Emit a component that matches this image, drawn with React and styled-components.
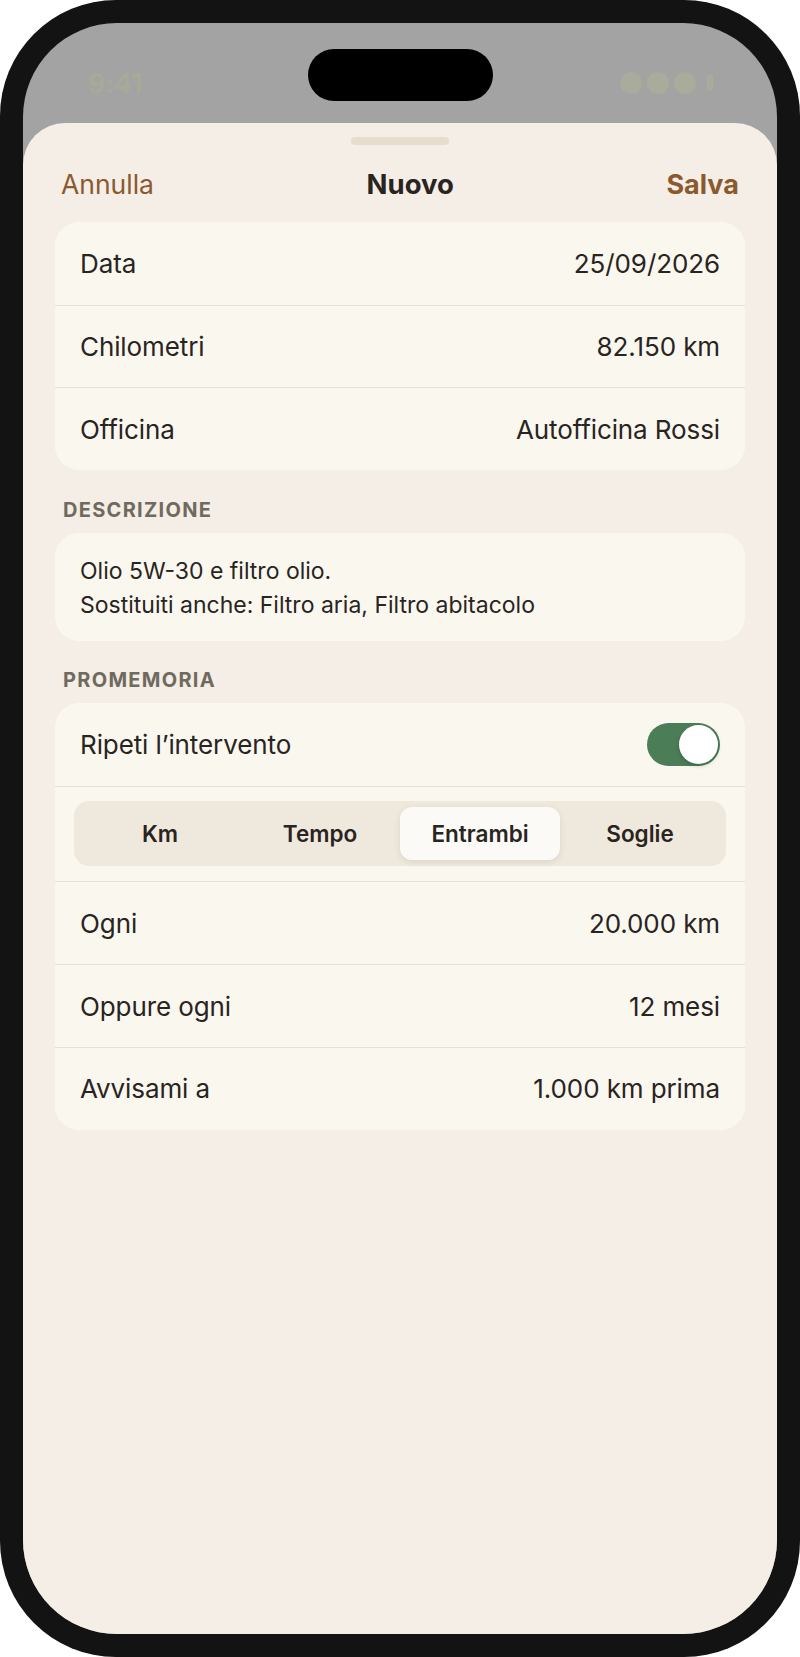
import React, { useState } from 'react';
import styled, { createGlobalStyle } from 'styled-components';

const GlobalStyle = createGlobalStyle`
  html, body {
    margin: 0;
    padding: 0;
    background: #ffffff;
  }
  * {
    box-sizing: border-box;
  }
`;

// Phone shell
const Phone = styled.div`
  width: 800px;
  height: 1657px;
  background: #131313;
  border-radius: 116px;
  padding: 23px;
  display: flex;
`;

const Screen = styled.div`
  flex: 1;
  display: flex;
  flex-direction: column;
  background: #a4a3a3;
  border-radius: 94px;
  overflow: hidden;
  font-family: Inter, "Noto Sans", sans-serif;
  color: #29241f;
`;

const StatusBar = styled.div`
  height: 100px;
  flex-shrink: 0;
  display: grid;
  grid-template-columns: 1fr auto 1fr;
  align-items: start;
  padding: 26px 64px 0 65px;
`;

const Time = styled.span`
  justify-self: start;
  margin-top: 18px;
  font-size: 27px;
  font-weight: 700;
  color: #a7a999;
  letter-spacing: -0.3px;
`;

const Island = styled.div`
  width: 185px;
  height: 52px;
  border-radius: 26px;
  background: #000;
`;

const StatusIcons = styled.div`
  justify-self: end;
  margin-top: 23px;
  display: flex;
  align-items: center;
  gap: 5px;
`;

const Dot = styled.span`
  width: 22px;
  height: 22px;
  border-radius: 50%;
  background: #a9ab9b;
`;

const Nub = styled.span`
  width: 6px;
  height: 16px;
  border-radius: 2px;
  background: #a9ab9b;
  margin-left: 6px;
`;

// Sheet
const Sheet = styled.div`
  flex: 1;
  display: flex;
  flex-direction: column;
  background: #f4eee6;
  border-radius: 42px 42px 0 0;
  padding: 14px 32px 0;
`;

const Grabber = styled.div`
  align-self: center;
  width: 98px;
  height: 8px;
  border-radius: 4px;
  background: #e6ddcc;
`;

const NavBar = styled.div`
  margin-top: 11px;
  height: 56px;
  display: flex;
  align-items: center;
  justify-content: space-between;
  padding: 0 6px;
  margin-bottom: 10px;
`;

const NavButton = styled.button`
  border: none;
  background: none;
  padding: 0;
  font-family: inherit;
  font-size: ${(p) => (p.$strong ? '27px' : '26.5px')};
  color: #8a5a2e;
  font-weight: ${(p) => (p.$strong ? 700 : 400)};
  cursor: pointer;
`;

const NavTitle = styled.span`
  font-size: 27.5px;
  font-weight: 700;
  color: #29241f;
`;

const Card = styled.div`
  background: #faf7ef;
  border-radius: 24px;
  overflow: hidden;
`;

const Row = styled.div`
  min-height: 82.7px;
  display: flex;
  align-items: center;
  justify-content: space-between;
  padding: 0 25px;
  font-size: 26px;
  letter-spacing: -0.1px;
  & + & {
    border-top: 1px solid #e8e0d1;
  }
`;

const Value = styled.span`
  color: #29241f;
`;

const SectionTitle = styled.div`
  margin: 27.5px 0 11px;
  padding-left: 8px;
  font-size: 20px;
  line-height: 24px;
  font-weight: 700;
  letter-spacing: 1.3px;
  color: #706a5e;
`;

const Description = styled.div`
  padding: 21px 25px 19px;
  font-size: 23px;
  line-height: 34px;
`;

const SegmentRow = styled.div`
  padding: 14.5px 19px 14.5px;
  border-top: 1px solid #e8e0d1;
  border-bottom: 1px solid #e8e0d1;
`;

const Segmented = styled.div`
  height: 65px;
  display: grid;
  grid-template-columns: repeat(4, 1fr);
  padding: 6px 6px;
  border-radius: 15px;
  background: #efe8dc;
`;

const Segment = styled.button`
  border: none;
  font-family: inherit;
  font-size: 22.5px;
  font-weight: 600;
  color: #29241f;
  border-radius: 12px;
  background: ${(p) => (p.$active ? '#fcfaf6' : 'transparent')};
  box-shadow: ${(p) => (p.$active ? '0 2px 6px rgba(60, 45, 20, 0.10)' : 'none')};
  cursor: pointer;
`;

const Toggle = styled.button`
  width: 73px;
  height: 43px;
  border: none;
  border-radius: 22px;
  padding: 2px;
  display: flex;
  justify-content: ${(p) => (p.$on ? 'flex-end' : 'flex-start')};
  background: ${(p) => (p.$on ? '#4b7d57' : '#d9d2c5')};
  cursor: pointer;
`;

const Knob = styled.span`
  width: 39px;
  height: 39px;
  border-radius: 50%;
  background: #ffffff;
  box-shadow: 0 2px 4px rgba(0, 0, 0, 0.18);
`;

const modes = ['Km', 'Tempo', 'Entrambi', 'Soglie'];

export default function App() {
  const [repeat, setRepeat] = useState(true);
  const [mode, setMode] = useState('Entrambi');

  return (
    <>
      <GlobalStyle />
      <Phone>
        <Screen>
          <StatusBar>
            <Time>9:41</Time>
            <Island />
            <StatusIcons>
              <Dot />
              <Dot />
              <Dot />
              <Nub />
            </StatusIcons>
          </StatusBar>
          <Sheet>
            <Grabber />
            <NavBar>
              <NavButton>Annulla</NavButton>
              <NavTitle>Nuovo</NavTitle>
              <NavButton $strong>Salva</NavButton>
            </NavBar>

            <Card>
              <Row>
                <span>Data</span>
                <Value>25/09/2026</Value>
              </Row>
              <Row>
                <span>Chilometri</span>
                <Value>82.150 km</Value>
              </Row>
              <Row>
                <span>Officina</span>
                <Value>Autofficina Rossi</Value>
              </Row>
            </Card>

            <SectionTitle>DESCRIZIONE</SectionTitle>
            <Card>
              <Description>
                Olio 5W-30 e filtro olio.
                <br />
                Sostituiti anche: Filtro aria, Filtro abitacolo
              </Description>
            </Card>

            <SectionTitle>PROMEMORIA</SectionTitle>
            <Card>
              <Row>
                <span>Ripeti l’intervento</span>
                <Toggle $on={repeat} onClick={() => setRepeat(!repeat)}>
                  <Knob />
                </Toggle>
              </Row>
              <SegmentRow>
                <Segmented>
                  {modes.map((m) => (
                    <Segment key={m} $active={m === mode} onClick={() => setMode(m)}>
                      {m}
                    </Segment>
                  ))}
                </Segmented>
              </SegmentRow>
              <Row>
                <span>Ogni</span>
                <Value>20.000 km</Value>
              </Row>
              <Row>
                <span>Oppure ogni</span>
                <Value>12 mesi</Value>
              </Row>
              <Row>
                <span>Avvisami a</span>
                <Value>1.000 km prima</Value>
              </Row>
            </Card>
          </Sheet>
        </Screen>
      </Phone>
    </>
  );
}
